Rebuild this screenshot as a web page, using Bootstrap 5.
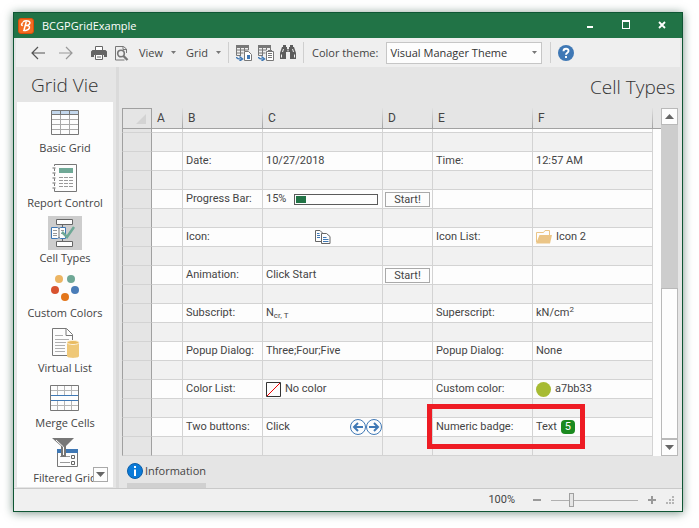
<!DOCTYPE html>
<html lang="en">
<head>
<meta charset="utf-8">
<meta name="viewport" content="width=device-width, initial-scale=1">
<title>BCGPGridExample</title>
<link href="https://cdn.jsdelivr.net/npm/bootstrap@5.3.0/dist/css/bootstrap.min.css" rel="stylesheet">
<style>
  body { background: #fff; padding: 12px 16px 16px 13px; font: 11px/16px "Open Sans", "Noto Sans", sans-serif; color: #444; }
  svg { display: block; }
  .app-window { border: 1px solid #0f5634; box-shadow: 0 1px 9px rgba(15, 60, 40, .55); background: #e5e5e5; }
  .title-bar { height: 25px; background: #217346; color: #fff; padding: 0 2px 0 4px; }
  .win-btn { background: none; border: 0; padding: 0 0 2px; width: 36px; height: 22px; }
  .inner { margin: 0 2px; }
  .tools { height: 29px; background: #efefef; padding-left: 8px; }
  .tool { background: none; border: 0; padding: 0; color: #444; height: 24px; display: flex; align-items: center; justify-content: center; }
  .tool-nav { width: 28px; }
  .tool-icon { width: 22px; }
  .tool-menu { gap: 8px; padding: 0 3px 0 7px; }
  .rule { width: 1px; height: 21px; background: #cfcfcf; }
  .theme-select { width: 156px; height: 22px; min-height: 0; padding: 0 20px 0 3px; font-size: 11px; line-height: 16px; border: 1px solid #c6c6c6; border-radius: 0; background: #fdfdfd; color: #333; }
  .theme-arrow { position: absolute; right: 5px; top: 9px; pointer-events: none; }
  .side { width: 98px; margin-right: 2px; padding: 0 1px; }
  .side-title, .page-title { font-weight: 300; font-size: 19px; line-height: 24px; color: #333; margin: 0; }
  .side-title { height: 35px; padding: 6px 0 0 14px; white-space: nowrap; }
  .page-title { height: 41px; padding: 8px 5px 0 0; text-align: right; }
  .side-nav { background: #fdfdfd; padding-top: 4px; gap: 5px; height: 385px; overflow: hidden; position: relative; }
  .side-nav a { color: #444; text-decoration: none; text-align: center; white-space: nowrap; }
  .side-icon { width: 34px; height: 34px; margin: 0 auto; }
  .side-icon.current { background: #cdcdcd; }
  .more-btn { position: absolute; right: 5px; bottom: 5px; width: 15px; height: 15px; padding: 0; background: #fdfdfd; border: 1px solid #a9a9a9; display: grid; place-items: center; }
  .split { width: 3px; background: #dadada; margin-right: 3px; }
  .grid-area { min-width: 0; }
  .sheet { table-layout: fixed; width: 100%; border-collapse: separate; border-spacing: 0; font: 11px/18px Roboto, "Liberation Sans", sans-serif; color: #444; }
  .sheet th, .sheet td { padding: 0 3px; white-space: nowrap; border-right: 1px solid #d3d3d3; border-bottom: 1px solid #d3d3d3; font-weight: 400; height: 19px; background: #fdfdfd; }
  .sheet tr.alt td { background: #f1f1f1; }
  .sheet tbody th { background: #e5e5e5; border-left: 1px solid #a0a0a0; border-right-color: #a0a0a0; }
  .sheet tbody tr.sliver > * { height: 4px; line-height: 3px; font-size: 0; }
  .sheet thead th { height: 21px; line-height: 20px; font-size: 12px; padding: 0 5px; background: #e5e5e5; border-bottom-color: #a0a0a0; border-image: linear-gradient(#e5e5e5, #a0a0a0) 1; border-width: 0 1px 1px 0; }
  .sheet thead th.corner { border: 1px solid #a0a0a0; border-image: none; }
  .sheet .filler { border-right: 0 !important; background: #fdfdfd !important; border-bottom-color: #fdfdfd; }
  .sheet thead .filler { background: #e5e5e5 !important; border-image: none; border-bottom: 1px solid #a0a0a0; }
  .cell-line { display: flex; align-items: center; height: 18px; gap: 4px; }
  .meter { flex: 1; height: 11px; border: 1px solid #5a5a5a; background: #fdfdfd; padding: 1px; margin: 0 1px 0 4px; }
  .meter div { height: 7px; background: #217346; }
  .cell-btn { display: block; width: 100%; height: 15px; line-height: 13px; padding: 0; border: 1px solid #a9a9a9; background: #fdfdfd; color: #444; }
  .sheet td.btn-cell { padding: 0 2px; }
  .round-btn { border: 0; background: none; padding: 0; }
  .sheet sub, .sheet sup { font-size: 8px; }
  .num-badge { width: 14px; height: 14px; border-radius: 4px; background: #1b8a1f; color: #fff; line-height: 14px; text-align: center; }
  .swatch { width: 15px; height: 15px; border-radius: 50%; background: #a7bb33; }
  .marker { position: absolute; z-index: 2; left: -9px; top: -14px; width: 158px; height: 45px; border: 5px solid #ee1c24; pointer-events: none; }
  .vscroll { width: 17px; margin-right: 2px; background: #cdcdcd; }
  .vscroll button, .thumb { border: 1px solid #b9b9b9; background: #fdfdfd; padding: 0; }
  .vscroll button { height: 17px; display: grid; place-items: center; }
  .info-tab { padding: 6px 0 0 5px; height: 32px; }
  .info-tab a { color: #444; text-decoration: none; display: inline-flex; gap: 2px; align-items: center; border-bottom: 5px solid #d0d0d0; height: 26px; padding-bottom: 4px; }
  .status { height: 23px; border-top: 1px solid #c9c9c9; background: #f0f0f0; font-family: Roboto, sans-serif; }
  .zoom-btn { border: 0; background: none; padding: 0; width: 12px; height: 16px; display: grid; place-items: center; }
  .zoom-range { appearance: none; width: 87px; height: 16px; margin: 0; background: linear-gradient(#b0b0b0, #b0b0b0) center / 100% 1px no-repeat; }
  .zoom-range::-webkit-slider-thumb { appearance: none; width: 5px; height: 14px; border: 1px solid #a0a0a0; background: #e5e5e5; }
</style>
<script src="https://cdn.jsdelivr.net/npm/bootstrap@5.3.0/dist/js/bootstrap.bundle.min.js"></script>
</head>
<body>
<div class="app-window">
  <header class="title-bar d-flex align-items-center">
    <svg width="16" height="16" viewBox="0 0 16 16"><rect x=".5" y=".5" width="15" height="15" rx="2.5" fill="#f36b21" stroke="#d94f0c"/><path d="M5 3.8c2.500-1.600 7.800-1.200 6.800 1.600-.5 1.600-2.800 2.100-4.300 2.100 2.300-.3 4.500.4 3.900 2.500-.8 2.600-4.900 2.900-6.300 2.100M8.300 3.600 6 12M5 4.500C3.200 5.800 3 7.500 4.800 7.500" fill="none" stroke="#fff" stroke-width="1.500"/></svg>
    <span class="ms-2">BCGPGridExample</span>
    <div class="ms-auto d-flex">
      <button class="win-btn" aria-label="Minimize"><svg class="mx-auto" width="10" height="10" viewBox="0 0 10 10"><path d="M2 7h6" stroke="#fff" stroke-width="2"/></svg></button>
      <button class="win-btn" aria-label="Maximize"><svg class="mx-auto" width="10" height="10" viewBox="0 0 10 10"><path d="M1 1.500h8M1.500 1v8M8.500 1v8M1 8.500h8" stroke="#fff" fill="none"/><path d="M1 1h8" stroke="#fff" stroke-width="2"/></svg></button>
      <button class="win-btn" aria-label="Close"><svg class="mx-auto" width="10" height="10" viewBox="0 0 10 10"><path d="m2 2 6 6M8 2 2 8" stroke="#fff" stroke-width="1.800"/></svg></button>
    </div>
  </header>

  <div class="inner">
    <div class="tools d-flex align-items-center" role="toolbar" aria-label="Main">
      <button class="tool tool-nav" aria-label="Back"><svg width="14" height="14" viewBox="0 0 14 14" fill="none" stroke="#555" stroke-width="1.200"><path d="M14 7H1M7 1 1 7l6 6"/></svg></button>
      <button class="tool tool-nav" aria-label="Forward"><svg width="14" height="14" viewBox="0 0 14 14" fill="none" stroke="#999" stroke-width="1.200"><path d="M0 7h13M7 1l6 6-6 6"/></svg></button>
      <button class="tool tool-icon ms-2" aria-label="Print"><svg width="16" height="16" viewBox="0 0 16 16"><path d="M4.500 6V1.500h7V6" fill="#fff" stroke="#666"/><path d="M0 6.500 1.500 5h13L16 6.500V12h-3v-2H3v2H0z" fill="#666"/><path d="M4.500 9.500h7v5h-7z" fill="#fff" stroke="#666"/><path d="M6 12h4" stroke="#666"/></svg></button>
      <button class="tool tool-icon" aria-label="Print preview"><svg width="15" height="16" viewBox="0 0 15 16" fill="none" stroke="#777"><path d="M12.500 8V4L9.500 1.500h-8V15h9" /><path d="M9 1.500V4.500h3.500"/><circle cx="7" cy="8.500" r="3.300" stroke-width="1.600"/><path d="m9.500 11 4 4" stroke-width="2.400"/></svg></button>
      <button class="tool tool-menu">View <svg width="5" height="3" viewBox="0 0 5 3"><path d="M0 0h5L2.500 3z" fill="#777"/></svg></button>
      <button class="tool tool-menu">Grid <svg width="5" height="3" viewBox="0 0 5 3"><path d="M0 0h5L2.500 3z" fill="#777"/></svg></button>
      <span class="rule mx-1"></span>
      <button class="tool tool-icon" aria-label="Load layout"><svg width="16" height="16" viewBox="0 0 16 16" fill="none" stroke="#777"><path d="M0 1.500h13" stroke-width="3"/><path d="M.5 2v8.500H5M12.500 2v3M.5 5h12M.5 8h7M4.500 3v7M8.500 3v3"/><path d="M8.500 6.500h4l3 3v6h-7z" fill="#fff"/><path d="M11 10h3v4h-3z" fill="#3f78b5" stroke="none"/><path d="M.5 12c0 2 1.500 2 4 2M3.500 11.500 6.500 14l-3 2" stroke="#3f78b5" stroke-width="1.500"/></svg></button>
      <button class="tool tool-icon" aria-label="Save layout"><svg width="16" height="16" viewBox="0 0 16 16" fill="none" stroke="#777"><path d="M0 1.500h13" stroke-width="3"/><path d="M.5 2v8.500H5M12.500 2v3M.5 5h8M.5 8h7M4.500 3v7M8.500 3v2"/><path d="M8.500 6.500h7v9h-7z" fill="#fff"/><path d="M10 5.500h4M10 8.500h4M10 10.500h4M10 12.500h4" /><path d="M.5 12c0 2 1.500 2 4 2M3.500 11.500 6.500 14l-3 2" stroke="#3f78b5" stroke-width="1.500"/></svg></button>
      <button class="tool tool-icon" aria-label="Find"><svg width="16" height="15" viewBox="0 0 16 15" fill="#5c5c5c"><path d="M3 0h3v2h1v2h2V2h1V0h3v2h1l2 6v6h-6V7H6v7H0V8l2-6h1z"/><path d="M1.500 9.500v3M14.500 9.500v3M3.500 4 2.500 7M12.500 4l1 3M8 4.500v2" stroke="#efefef" fill="none"/></svg></button>
      <span class="rule ms-1 me-2"></span>
      <label for="theme">Color theme:</label>
      <div class="position-relative mx-2">
        <select id="theme" class="form-select theme-select"><option>Visual Manager Theme</option></select>
        <svg class="theme-arrow" width="5" height="3" viewBox="0 0 5 3"><path d="M0 0h5L2.500 3z" fill="#777"/></svg>
      </div>
      <span class="rule me-1"></span>
      <button class="tool tool-icon" aria-label="Help"><svg width="16" height="16" viewBox="0 0 16 16"><circle cx="8" cy="8" r="8" fill="#3f78b5"/><path d="M5.500 6.200C5.500 2.800 10.700 3 10.500 6 10.400 7.800 8 7.600 8 9.800M8 11v2" fill="none" stroke="#fff" stroke-width="1.900"/></svg></button>
    </div>

    <div class="d-flex">
      <aside class="side flex-shrink-0">
        <h2 class="side-title">Grid Vie</h2>
        <nav class="side-nav d-flex flex-column">
          <a href="#"><div class="side-icon"><svg width="34" height="34" viewBox="0 0 34 34" fill="none"><path d="M3.500 4.500h27v24h-27z" fill="#fdfdfd"/><path d="M4 5h26v3.500H4z" fill="#c3d7ec"/><path d="M4 13.500h26M4 18.500h26M4 23.500h26M12.500 9v19M21.500 9v19" stroke="#a9a9a9"/><path d="M3.500 4.500h27v24h-27zM4 8.500h26M12.500 5v4M21.500 5v4" stroke="#777"/></svg></div>Basic Grid</a>
          <a href="#"><div class="side-icon"><svg width="34" height="34" viewBox="0 0 34 34" fill="none"><path d="M6.500 3.500h22v27h-22z" stroke="#777"/><path d="M6.500 5v25" stroke="#fdfdfd" stroke-width="2" stroke-dasharray="2 3"/><path d="M4.500 7h3M4.500 12h3M4.500 17h3M4.500 22h3M4.500 27h3" stroke="#999" stroke-width="1.500"/><path d="M11 7h14v5H11z" fill="#6fa896"/><path d="M11 16.500h4m1 0h4m1 0h4M11 19.500h4m1 0h4m1 0h4M11 22.500h4m1 0h4m1 0h4M11 25.500h4m1 0h4m1 0h4" stroke="#999"/></svg></div>Report Control</a>
          <a href="#" aria-current="page"><div class="side-icon current"><svg width="34" height="34" viewBox="0 0 34 34" fill="none"><path d="M14.500 8v4M14.500 22v4M8.500 3.500h16v5h-16zM8.500 25.500h16v5h-16z" fill="#fdfdfd" stroke="#666"/><path d="M3.500 11.500h6l1.500 1 1.500-1h5v11h-5l-1.500-1-1.500 1h-6z" fill="#fdfdfd" stroke="#3f78b5"/><path d="M11 12v10" stroke="#777"/><path d="M5 14.500h4m4 0h3M5 17.500h4m4 0h3M5 19.500h4" stroke="#999"/><path d="m14 16 5 5 7-10" stroke="#6fa896" stroke-width="2.500"/></svg></div>Cell Types</a>
          <a href="#"><div class="side-icon"><svg width="34" height="34" viewBox="0 0 34 34"><circle cx="11" cy="8" r="4" fill="#ecb563"/><circle cx="23" cy="8" r="4" fill="#6fa896"/><circle cx="7" cy="19" r="4" fill="#d8532f"/><circle cx="27" cy="19" r="4" fill="#4a7db8"/><circle cx="17" cy="26" r="4" fill="#e3761b"/></svg></div>Custom Colors</a>
          <a href="#"><div class="side-icon"><svg width="34" height="34" viewBox="0 0 34 34" fill="none"><path d="M19 29.500H4.500v-27h14l6 6V14M18 3v6.500h6.500" stroke="#777"/><path d="M7 9.500h8M7 13.500h14M7 16.500h11M7 19.500h10M7 22.500h10M7 25.500h10" stroke="#b0b0b0"/><path d="M19 16v14c0 2.500 12 2.500 12 0V16z" fill="#efc878"/><ellipse cx="25" cy="16.500" rx="6" ry="2" fill="#e9bb60" stroke="#fdf2dc"/></svg></div>Virtual List</a>
          <a href="#"><div class="side-icon"><svg width="34" height="34" viewBox="0 0 34 34" fill="none"><path d="M3 9.500h28M3 24.500h28M9.500 5v9M16.500 5v9M23.500 5v9M9.500 20v9M16.500 20v9M23.500 20v9" stroke="#b5b5b5"/><path d="M2.500 4.500h28v25h-28z" stroke="#777"/><path d="M3 14.500h27M3 19.500h27" stroke="#3f78b5"/></svg></div>Merge Cells</a>
          <a href="#"><div class="side-icon"><svg width="34" height="34" viewBox="0 0 34 34" fill="none"><path d="M9.500 13.500h20v17h-20z" stroke="#777" fill="#fdfdfd"/><path d="M9 13h21v4H9z" fill="#3f78b5"/><path d="M12 20.500h10M12 26.500h10" stroke="#999"/><path d="M23.500 19.500h3v3h-3zM23.500 25.500h3v3h-3z" stroke="#666"/><path d="M4 2h22l-8 8v11h-5V10z" fill="#777"/><path d="m8 4 7.500 7v8" stroke="#fdfdfd"/></svg></div>Filtered Grid</a>
          <button class="more-btn" aria-label="More"><svg width="9" height="5" viewBox="0 0 9 5"><path d="M0 0h9L4.500 5z" fill="#666"/></svg></button>
        </nav>
      </aside>
      <div class="split flex-shrink-0"></div>

      <main class="flex-fill grid-area">
        <h1 class="page-title">Cell Types</h1>
        <div class="d-flex">
          <div class="flex-fill grid-area">
          <table class="sheet">
            <colgroup><col style="width:30px"><col style="width:31px"><col style="width:80px"><col style="width:120px"><col style="width:50px"><col style="width:100px"><col><col style="width:8px"></colgroup>
            <thead><tr><th class="corner"><svg class="ms-auto" width="10" height="10" viewBox="0 0 10 10"><path d="M10 0v10H0z" fill="#d3d3d3"/></svg></th><th>A</th><th>B</th><th>C</th><th>D</th><th>E</th><th>F</th><th class="filler"></th></tr></thead>
            <tbody>
              <tr class="sliver"><th></th><td></td><td></td><td></td><td></td><td></td><td></td><td class="filler"></td></tr>
              <tr class="alt"><th></th><td></td><td></td><td></td><td></td><td></td><td></td><td class="filler"></td></tr>
              <tr><th></th><td></td><td>Date:</td><td>10/27/2018</td><td></td><td>Time:</td><td>12:57 AM</td><td class="filler"></td></tr>
              <tr class="alt"><th></th><td></td><td></td><td></td><td></td><td></td><td></td><td class="filler"></td></tr>
              <tr><th></th><td></td><td>Progress Bar:</td><td><div class="cell-line">15%<div class="meter" role="progressbar" aria-label="Progress" aria-valuenow="15" aria-valuemin="0" aria-valuemax="100"><div style="width:12%"></div></div></div></td><td class="btn-cell"><button class="cell-btn">Start!</button></td><td></td><td></td><td class="filler"></td></tr>
              <tr class="alt"><th></th><td></td><td></td><td></td><td></td><td></td><td></td><td class="filler"></td></tr>
              <tr><th></th><td></td><td>Icon:</td><td><svg class="mx-auto" width="16" height="16" viewBox="0 0 16 16" fill="#fdfdfd" stroke="#666"><path d="M.5 1.500H5L7.500 4v8.500h-7z"/><path d="M6.500 4.500h5l3.500 3v7H6.500z"/><path d="M2 4.500h2.500M2 6.500h3M2 8.500h3M8 8.500h3.500M8 10.500h5.500M8 12.500h5.500" stroke="#3f78b5"/></svg></td><td></td><td>Icon List:</td><td><div class="cell-line"><svg width="16" height="14" viewBox="0 0 16 14"><path d="M.5 12V2.500h7l1.500-2h4.500V5" fill="#fdfdfd" stroke="#ebc587"/><path d="M3.500 5H16l-2 8.500H0z" fill="#ebc587"/></svg>Icon 2</div></td><td class="filler"></td></tr>
              <tr class="alt"><th></th><td></td><td></td><td></td><td></td><td></td><td></td><td class="filler"></td></tr>
              <tr><th></th><td></td><td>Animation:</td><td>Click Start</td><td class="btn-cell"><button class="cell-btn">Start!</button></td><td></td><td></td><td class="filler"></td></tr>
              <tr class="alt"><th></th><td></td><td></td><td></td><td></td><td></td><td></td><td class="filler"></td></tr>
              <tr><th></th><td></td><td>Subscript:</td><td>N<sub>cr, T</sub></td><td></td><td>Superscript:</td><td>kN/cm<sup>2</sup></td><td class="filler"></td></tr>
              <tr class="alt"><th></th><td></td><td></td><td></td><td></td><td></td><td></td><td class="filler"></td></tr>
              <tr><th></th><td></td><td>Popup Dialog:</td><td>Three;Four;Five</td><td></td><td>Popup Dialog:</td><td>None</td><td class="filler"></td></tr>
              <tr class="alt"><th></th><td></td><td></td><td></td><td></td><td></td><td></td><td class="filler"></td></tr>
              <tr><th></th><td></td><td>Color List:</td><td><div class="cell-line"><svg width="15" height="15" viewBox="0 0 15 15"><path d="M.5.500h14v14H.5z" fill="#fdfdfd" stroke="#333"/><path d="M1 14 14 1" stroke="#ee0000"/></svg>No color</div></td><td></td><td>Custom color:</td><td><div class="cell-line"><span class="swatch"></span>a7bb33</div></td><td class="filler"></td></tr>
              <tr class="alt"><th></th><td></td><td></td><td></td><td></td><td></td><td></td><td class="filler"></td></tr>
              <tr><th></th><td></td><td>Two buttons:</td><td class="pe-0"><div class="cell-line gap-0"><span class="me-auto">Click</span>
                <button class="round-btn" aria-label="Previous"><svg width="16" height="16" viewBox="0 0 16 16" fill="none" stroke="#3f78b5"><circle cx="8" cy="8" r="7.500"/><path d="M13 8H4M8 4 4 8l4 4" stroke-width="2"/></svg></button><button class="round-btn" aria-label="Next"><svg width="16" height="16" viewBox="0 0 16 16" fill="none" stroke="#3f78b5"><circle cx="8" cy="8" r="7.500"/><path d="M3 8h9M8 4l4 4-4 4" stroke-width="2"/></svg></button></div></td><td></td><td><div class="position-relative">Numeric badge:<span class="marker"></span></div></td><td><div class="cell-line">Text<span class="num-badge">5</span></div></td><td class="filler"></td></tr>
              <tr class="alt"><th></th><td></td><td></td><td></td><td></td><td></td><td></td><td class="filler"></td></tr>
            </tbody>
          </table>
          </div>
          <div class="vscroll d-flex flex-column flex-shrink-0">
            <button aria-label="Scroll up"><svg width="9" height="5" viewBox="0 0 9 5"><path d="M0 5h9L4.500 0z" fill="#666"/></svg></button>
            <div style="flex:165"></div>
            <div class="thumb" style="flex:150"></div>
            <button aria-label="Scroll down"><svg width="9" height="5" viewBox="0 0 9 5"><path d="M0 0h9L4.500 5z" fill="#666"/></svg></button>
          </div>
        </div>
        <div class="info-tab"><a href="#"><svg width="16" height="16" viewBox="0 0 16 16"><circle cx="8" cy="8" r="7.500" fill="#0a7ad8" stroke="#0b5ea8"/><path d="M8 3v2M8 6.500V13" stroke="#fff" stroke-width="2"/></svg>Information</a></div>
      </main>
    </div>
  </div>
  <footer class="status d-flex align-items-center justify-content-end">
    <label for="zoom" class="me-3">100%</label>
    <button class="zoom-btn me-2" aria-label="Zoom out"><svg width="8" height="8" viewBox="0 0 8 8"><path d="M0 4h8" stroke="#999" stroke-width="2"/></svg></button>
    <input id="zoom" class="zoom-range" type="range" min="0" max="100" value="22">
    <button class="zoom-btn mx-2" aria-label="Zoom in"><svg width="8" height="8" viewBox="0 0 8 8"><path d="M0 4h8M4 0v8" stroke="#999" stroke-width="2"/></svg></button>
    <svg class="me-2" width="8" height="8" viewBox="0 0 8 8" fill="#b5b5b5"><path d="M6 0h2v2H6zM3 3h2v2H3zM6 3h2v2H6zM0 6h2v2H0zM3 6h2v2H3zM6 6h2v2H6z"/></svg>
  </footer>
</div>
</body>
</html>
